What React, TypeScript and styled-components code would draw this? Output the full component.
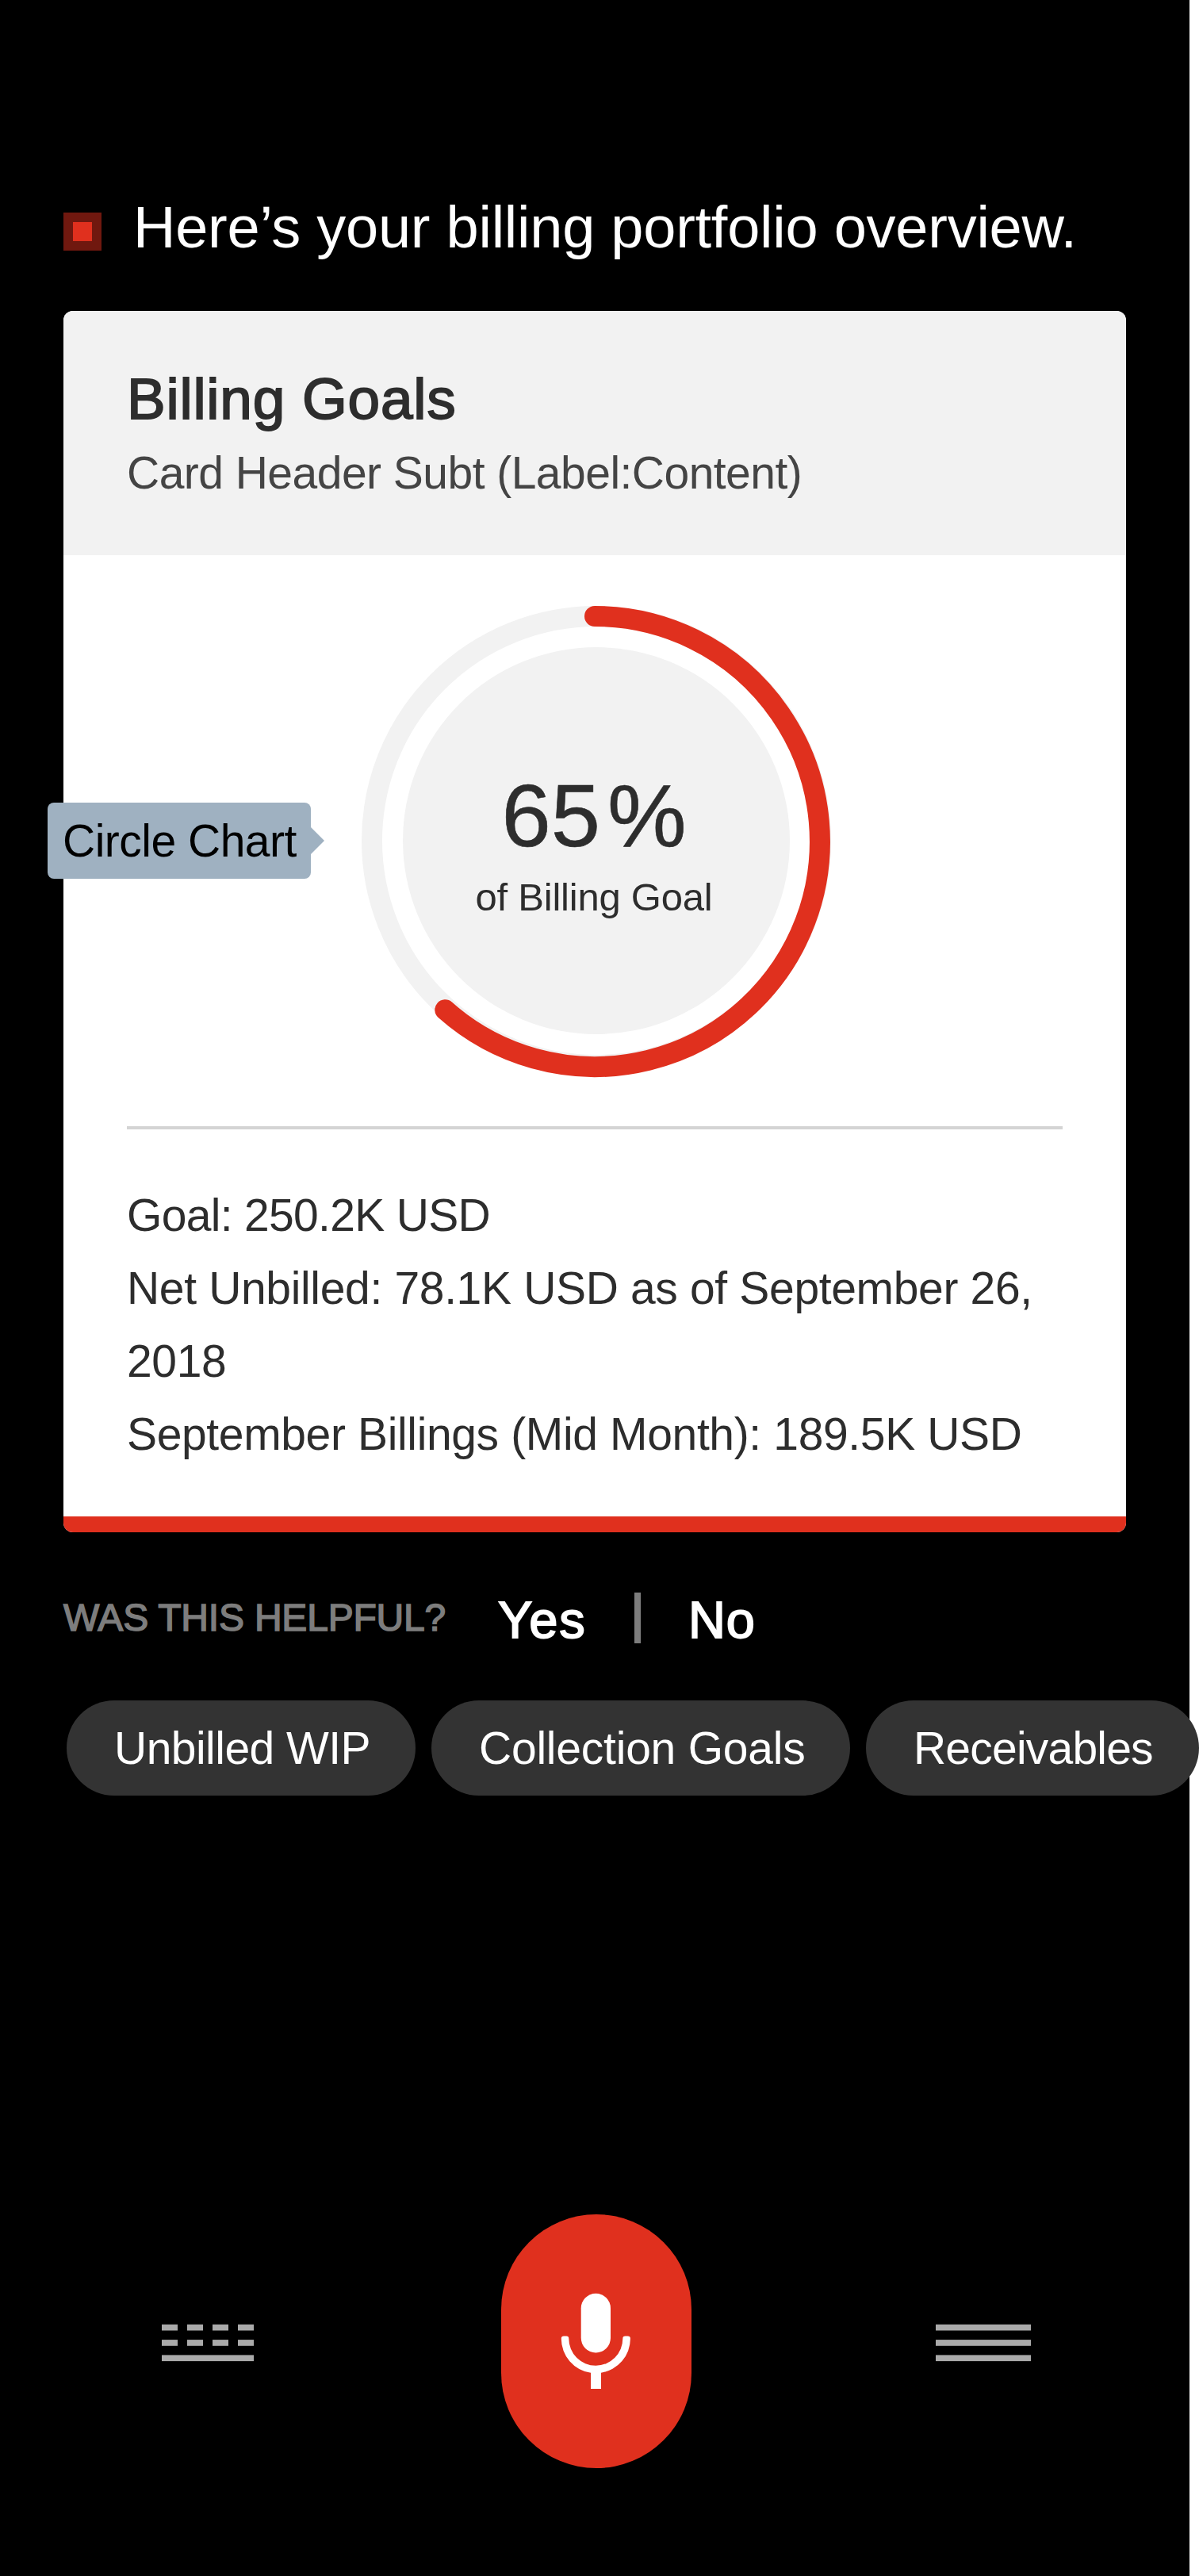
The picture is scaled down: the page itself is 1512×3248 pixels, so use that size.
import React from 'react';
import styled, { createGlobalStyle } from 'styled-components';

const RED = '#e0301e';
const INK = '#2d2d2d';
const PALE = '#f2f2f2';

const GlobalStyle = createGlobalStyle`
  *, *::before, *::after { box-sizing: border-box; }
  html, body { margin: 0; background: #ffffff; }
  body {
    font-family: "Liberation Sans", Arial, sans-serif;
    overflow-x: hidden;
  }
  h1, h2, p { margin: 0; font-weight: 400; }
  button {
    font: inherit;
    border: 0;
    padding: 0;
    margin: 0;
    background: none;
    color: inherit;
    cursor: pointer;
  }
  svg { display: block; }
`;

const Screen = styled.main`
  width: 1500px;
  height: 3248px;
  padding: 244px 80px 0;
  background: #000000;
  color: #ffffff;
`;

const Greeting = styled.header`
  display: flex;
  align-items: flex-start;
  gap: 40px;
  height: 84px;
  margin-bottom: 64px;
`;

const Marker = styled.span`
  display: flex;
  align-items: center;
  justify-content: center;
  flex: none;
  width: 48px;
  height: 48px;
  margin-top: 24px;
  background: #70180f;

  &::after {
    content: '';
    width: 24px;
    height: 24px;
    background: ${RED};
  }
`;

const GreetingText = styled.h1`
  font-size: 74px;
  line-height: 86px;
  letter-spacing: -0.25px;
  white-space: nowrap;
`;

const Card = styled.section`
  display: flex;
  flex-direction: column;
  width: 1340px;
  height: 1540px;
  border-radius: 12px;
  background: #ffffff;
  color: ${INK};
`;

const CardHeader = styled.div`
  height: 308px;
  padding: 67px 80px 0;
  border-radius: 12px 12px 0 0;
  background: ${PALE};
`;

const CardTitle = styled.h2`
  font-size: 73px;
  line-height: 88px;
  letter-spacing: 0.75px;
  -webkit-text-stroke: 1.8px ${INK};
`;

const CardSubtitle = styled.p`
  margin-top: 3px;
  font-size: 57px;
  line-height: 92px;
  letter-spacing: -0.53px;
  color: #444444;
`;

const ChartArea = styled.div`
  position: relative;
  display: flex;
  align-items: center;
  justify-content: center;
  height: 720px;
`;

const Chart = styled.div`
  display: grid;
  width: 600px;
  height: 600px;

  & > * { grid-area: 1 / 1; }
`;

const ChartText = styled.div`
  display: flex;
  flex-direction: column;
  align-items: center;
  padding: 213px 2px 0 0;
  white-space: nowrap;
`;

const Percent = styled.p`
  display: flex;
  gap: 9px;
  font-size: 112px;
  line-height: 112px;
  -webkit-text-stroke: 0.6px ${INK};
`;

const PercentLabel = styled.p`
  margin-top: 18px;
  font-size: 49px;
  line-height: 56px;
  letter-spacing: -0.23px;
`;

const ChartTag = styled.div`
  position: absolute;
  left: -20px;
  top: 312px;
  display: flex;
  align-items: center;
  width: 332px;
  height: 96px;
  padding-left: 19px;
  border-radius: 8px;
  background: #9fb1c1;
  color: #000000;
  font-size: 57px;
  letter-spacing: -0.5px;
  line-height: 92px;
  white-space: nowrap;

  &::after {
    content: '';
    position: absolute;
    left: 332px;
    top: 31px;
    border: 17px solid transparent;
    border-left-color: #9fb1c1;
    border-right-width: 0;
  }
`;

const Divider = styled.hr`
  width: 1180px;
  height: 4px;
  margin: 0 80px;
  border: 0;
  background: #d4d4d4;
`;

const Details = styled.div`
  flex: 1;
  padding: 62px 80px 0;
`;

const DetailLine = styled.p<{ $tracking: number }>`
  font-size: 57px;
  line-height: 92px;
  letter-spacing: ${(p) => p.$tracking}px;
`;

const CardAccent = styled.div`
  height: 20px;
  border-radius: 0 0 12px 12px;
  background: ${RED};
`;

const Feedback = styled.div`
  display: grid;
  grid-template-columns: 548px 172px 8px auto;
  grid-template-rows: 64px;
  margin-top: 76px;
  white-space: nowrap;
`;

const FeedbackLabel = styled.span`
  font-size: 48px;
  line-height: 63px;
  letter-spacing: -0.2px;
  color: #7d7d7d;
  -webkit-text-stroke: 1.5px #7d7d7d;
`;

const Answer = styled.button<{ $tracking: number; $indent?: number }>`
  padding: 3px 0 0 ${(p) => p.$indent ?? 0}px;
  height: 67px;
  font-size: 65px;
  line-height: 64px;
  letter-spacing: ${(p) => p.$tracking}px;
  text-align: left;
  -webkit-text-stroke: 1.8px #ffffff;
`;

const AnswerDivider = styled.span`
  background: #7d7d7d;
`;

const Chips = styled.div`
  display: flex;
  gap: 20px;
  width: 1428px;
  margin: 72px 0 0 4px;
`;

const Chip = styled.button<{ $width: number; $tracking: number }>`
  flex: none;
  width: ${(p) => p.$width}px;
  height: 120px;
  padding-left: 60px;
  border-radius: 60px;
  background: #333333;
  color: #ffffff;
  font-size: 57px;
  line-height: 120px;
  letter-spacing: ${(p) => p.$tracking}px;
  text-align: left;
  white-space: nowrap;
`;

const Controls = styled.nav`
  display: flex;
  align-items: center;
  margin-top: 528px;
  padding-left: 124px;
`;

const IconButton = styled.button`
  flex: none;
`;

const MicButton = styled.button`
  flex: none;
  width: 240px;
  height: 320px;
  margin: 0 308px 0 312px;
  border-radius: 120px;
  background: ${RED};
`;

const details = [
  { text: 'Goal: 250.2K USD', tracking: -0.68 },
  { text: 'Net Unbilled: 78.1K USD as of September 26, 2018', tracking: -0.34 },
  { text: 'September Billings (Mid Month): 189.5K USD', tracking: -0.36 },
];

const chips = [
  { text: 'Unbilled WIP', width: 440, tracking: -0.53 },
  { text: 'Collection Goals', width: 528, tracking: -0.22 },
  { text: 'Receivables', width: 420, tracking: -0.79 },
];

const iconRows = [8.8, 28.1, 47.4];

function GoalRing() {
  return (
    <svg width="600" height="600" viewBox="0 0 600 600" fill="none">
      <circle cx="302" cy="300" r="283" stroke={PALE} strokeWidth="26" />
      <circle cx="302" cy="300" r="244" fill={PALE} />
      <path
        d="M300 17A284 284 0 1 1 111.3 513.3"
        stroke={RED}
        strokeWidth="26"
        strokeLinecap="round"
      />
    </svg>
  );
}

function KeyboardIcon() {
  return (
    <svg width="116" height="60" viewBox="0 0 116 60" fill="#aaaaaa">
      {iconRows.slice(0, 2).map((y) =>
        [0, 32, 64, 96].map((x) => (
          <rect key={`${x}-${y}`} x={x} y={y} width="20" height="7.7" />
        )),
      )}
      <rect y={iconRows[2]} width="116" height="7.7" />
    </svg>
  );
}

function MenuIcon() {
  return (
    <svg width="120" height="60" viewBox="0 0 120 60" fill="#aaaaaa">
      {iconRows.map((y) => (
        <rect key={y} y={y} width="120" height="7.7" />
      ))}
    </svg>
  );
}

function MicIcon() {
  return (
    <svg width="240" height="320" viewBox="0 0 240 320" fill="#ffffff">
      <rect x="100.7" y="99.8" width="37.3" height="74.6" rx="18.65" />
      <path d="M79 153.5H82.2Q85.3 153.5 85.3 156.8A34 34 0 0 0 153.3 156.8Q153.3 153.5 156.4 153.5H159.6Q162.9 153.5 162.9 156.8A43.5 43.5 0 0 1 126 199.7V220H113V199.8A43.5 43.5 0 0 1 75.8 156.8Q75.8 153.5 79 153.5Z" />
    </svg>
  );
}

export default function App() {
  return (
    <>
      <GlobalStyle />
      <Screen>
        <Greeting>
          <Marker />
          <GreetingText>Here’s your billing portfolio overview.</GreetingText>
        </Greeting>

        <Card>
          <CardHeader>
            <CardTitle>Billing Goals</CardTitle>
            <CardSubtitle>Card Header Subt (Label:Content)</CardSubtitle>
          </CardHeader>
          <ChartArea>
            <Chart>
              <GoalRing />
              <ChartText>
                <Percent>
                  <span>65</span>
                  <span>%</span>
                </Percent>
                <PercentLabel>of Billing Goal</PercentLabel>
              </ChartText>
            </Chart>
            <ChartTag>Circle Chart</ChartTag>
          </ChartArea>
          <Divider />
          <Details>
            {details.map((d) => (
              <DetailLine key={d.text} $tracking={d.tracking}>
                {d.text}
              </DetailLine>
            ))}
          </Details>
          <CardAccent />
        </Card>

        <Feedback>
          <FeedbackLabel>WAS THIS HELPFUL?</FeedbackLabel>
          <Answer $tracking={1.8}>Yes</Answer>
          <AnswerDivider />
          <Answer $tracking={0.8} $indent={60}>
            No
          </Answer>
        </Feedback>

        <Chips>
          {chips.map((c) => (
            <Chip key={c.text} $width={c.width} $tracking={c.tracking}>
              {c.text}
            </Chip>
          ))}
        </Chips>

        <Controls>
          <IconButton aria-label="Keyboard">
            <KeyboardIcon />
          </IconButton>
          <MicButton aria-label="Speak">
            <MicIcon />
          </MicButton>
          <IconButton aria-label="Menu">
            <MenuIcon />
          </IconButton>
        </Controls>
      </Screen>
    </>
  );
}
